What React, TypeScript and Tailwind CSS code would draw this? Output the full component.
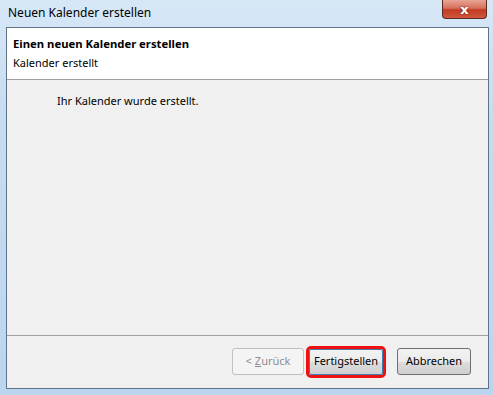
import React from "react";

export default function App() {
  const font = { fontFamily: '"Noto Sans", "Open Sans", sans-serif' };
  return (
    <div
      className="w-[493px] h-[395px] relative overflow-hidden bg-[linear-gradient(180deg,#d7e7f6_0%,#c6dcf1_30%,#bcd5ee_100%)] text-[11px] text-black"
      style={font}
    >
      {/* title bar */}
      <div className="h-[27px] flex items-start">
        <div className="pl-[8px] pt-[5px] text-[12px] leading-[16px] text-black">Neuen Kalender erstellen</div>
        <div className="ml-auto mr-[6px] w-[45px] h-[19px] rounded-b-[4px] border border-[#5b2a22] border-t-0 bg-[linear-gradient(180deg,#e8a594_0%,#d6705c_45%,#c23b23_55%,#d0583c_100%)] flex items-center justify-center">
          <span className="text-white font-bold text-[13px] leading-none [text-shadow:0_0_2px_#5a1a10]" style={{ fontFamily: '"DejaVu Sans", sans-serif' }}>x</span>
        </div>
      </div>
      {/* client */}
      <div className="ml-[6px] mr-[4px] h-[362px] border border-[#5f7389] bg-[#f0f0f0] flex flex-col">
        <div className="h-[52px] bg-white border-b border-[#a0a0a0] pl-[6px] pt-[7px]">
          <div className="font-bold text-[11.3px] leading-[17px]">Einen neuen Kalender erstellen</div>
          <div className="leading-[17px] mt-[2px]">Kalender erstellt</div>
        </div>
        <div className="flex-1 pl-[50px] pt-[12px] leading-[17px]">Ihr Kalender wurde erstellt.</div>
        <div className="h-[53px] border-t border-[#a0a0a0] flex items-center justify-end pr-[17px] pb-[1px]">
          <div className="w-[72px] h-[27px] border border-[#c0c0c0] rounded-[3px] bg-[#f4f4f4] text-[#8d8d8d] flex items-center justify-center">
            &lt; <span className="underline ml-[3px]">Z</span>urück
          </div>
          <div className="ml-[2px] w-[80px] h-[32px] border-[3px] border-[#ee1111] rounded-[5px] flex items-center justify-center">
            <div className="w-full h-full border border-[#3c7fb1] rounded-[2px] bg-[linear-gradient(180deg,#f2f2f2_0%,#ebebeb_50%,#dddddd_51%,#cfcfcf_100%)] flex items-center justify-center">
              Fertigstellen
            </div>
          </div>
          <div className="ml-[11px] w-[74px] h-[27px] border border-[#707070] rounded-[3px] bg-[linear-gradient(180deg,#f2f2f2_0%,#ebebeb_50%,#dddddd_51%,#cfcfcf_100%)] flex items-center justify-center">
            Abbrechen
          </div>
        </div>
      </div>
    </div>
  );
}
